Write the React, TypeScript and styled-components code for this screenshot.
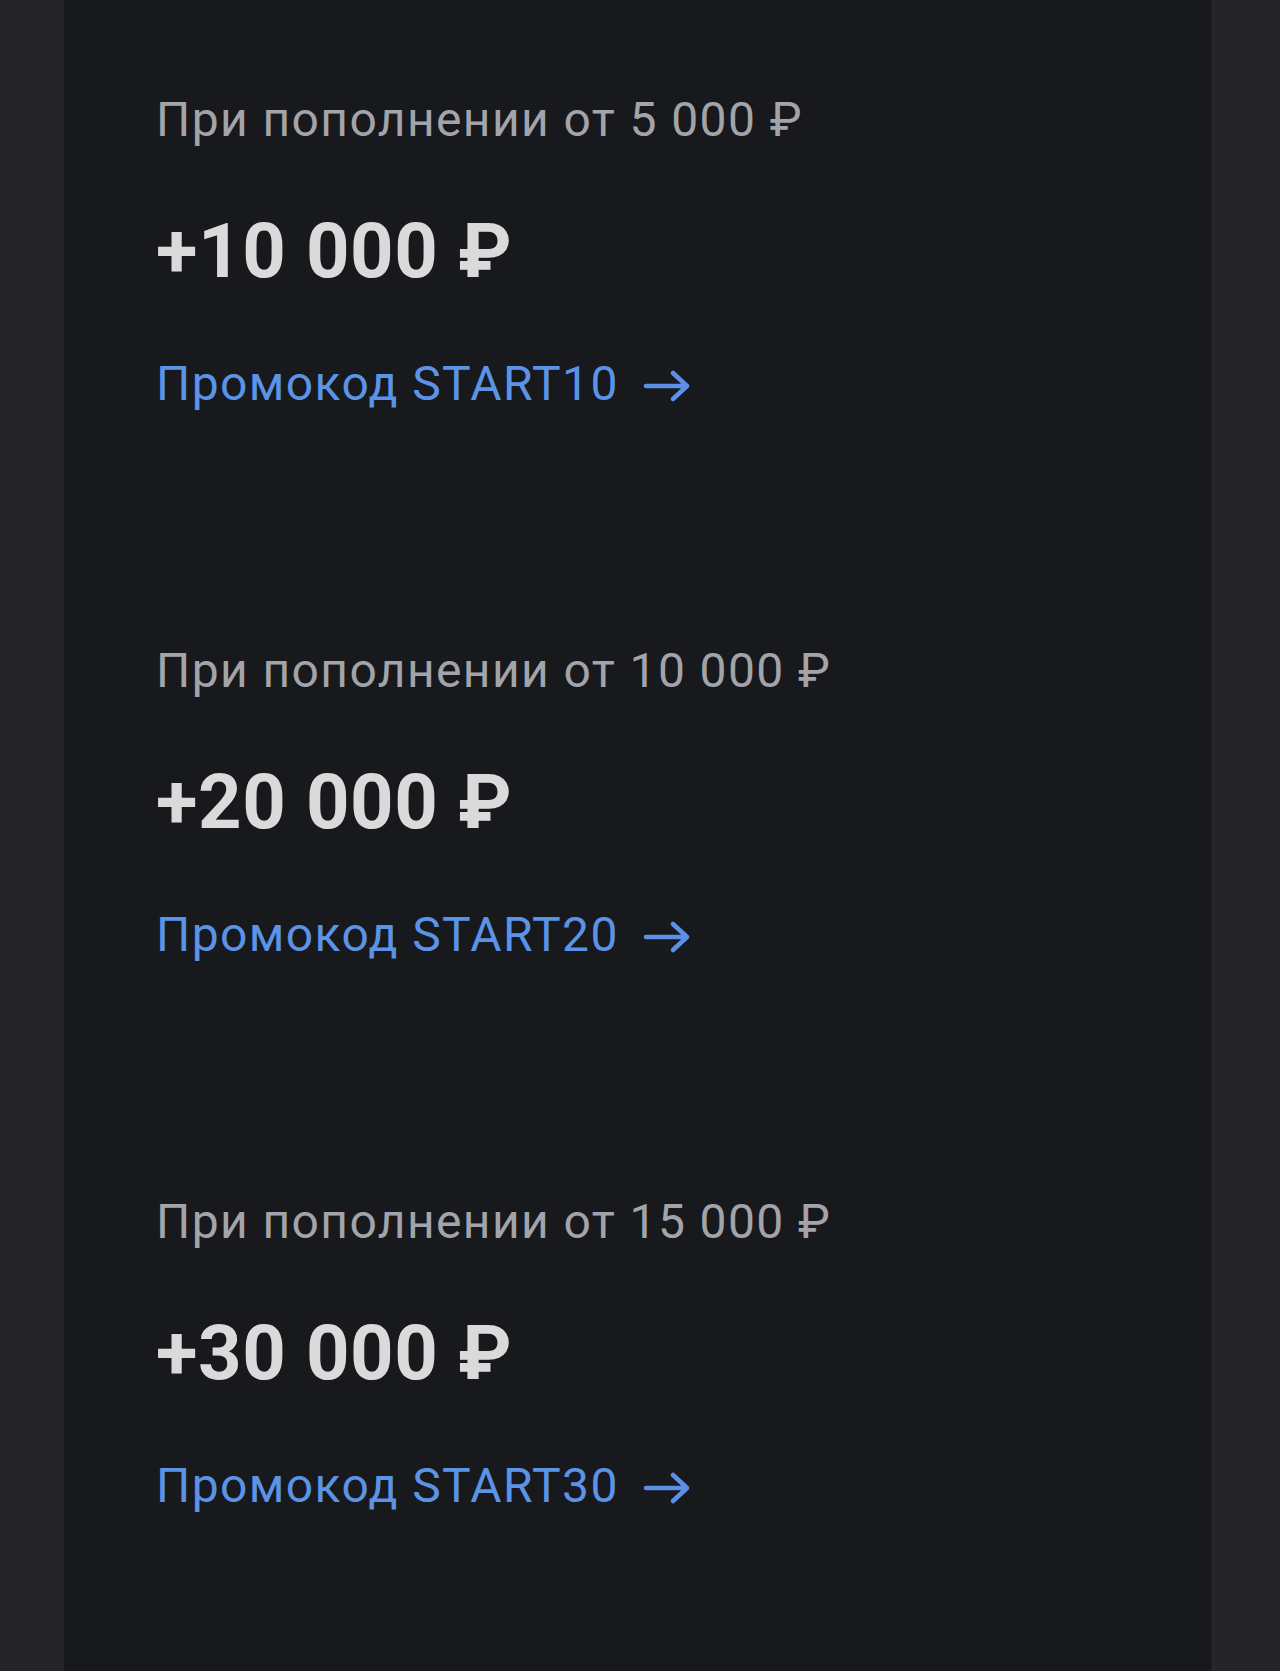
import { createGlobalStyle, styled } from 'styled-components';

const GlobalStyle = createGlobalStyle`
  html, body {
    margin: 0;
    padding: 0;
    background: #252429;
  }
  body {
    font-family: Roboto, "Noto Sans", sans-serif;
  }
`;

interface Offer {
  threshold: string;
  bonus: string;
  code: string;
}

const offers: Offer[] = [
  { threshold: '5 000', bonus: '+10 000', code: 'START10' },
  { threshold: '10 000', bonus: '+20 000', code: 'START20' },
  { threshold: '15 000', bonus: '+30 000', code: 'START30' },
];

const ArrowIcon = () => (
  <svg width="48" height="34" viewBox="0 0 48 34" fill="none">
    <path d="M3 17H44M30 4L44 17L30 30" stroke="#5b8fe8" strokeWidth="4.6" strokeLinecap="round" strokeLinejoin="round" />
  </svg>
);

const App = () => {
  return (
    <>
      <GlobalStyle />
      <Page>
        <Panel>
          {offers.map((offer) => (
            <OfferBlock key={offer.code}>
              <Label>При пополнении от {offer.threshold} ₽</Label>
              <Amount>{offer.bonus} ₽</Amount>
              <PromoLink href="#">
                <span>Промокод {offer.code}</span>
                <ArrowIcon />
              </PromoLink>
            </OfferBlock>
          ))}
        </Panel>
      </Page>
    </>
  );
};

export default App;

const Page = styled.div`
  width: 100%;
  min-height: 1671px;
  display: flex;
  padding: 0 67px 0 64px;
  box-sizing: border-box;
`;

const Panel = styled.main`
  flex: 1;
  min-height: 1671px;
  background: #18191d;
  border-right: 1px solid #2b2b30;
  padding: 92px 92px 0;
  box-sizing: border-box;
  display: flex;
  flex-direction: column;
  gap: 231px;
`;

const OfferBlock = styled.section`
  display: flex;
  flex-direction: column;
  align-items: flex-start;
`;

const Label = styled.p`
  margin: 0;
  font-size: 48px;
  line-height: 56px;
  font-weight: 400;
  color: #a3a4a9;
  letter-spacing: 1.4px;
`;

const Amount = styled.h2`
  margin: 59px 0 0;
  font-size: 76px;
  line-height: 88px;
  font-weight: 700;
  color: #dadada;
  letter-spacing: 0.6px;
`;

const PromoLink = styled.a`
  margin-top: 61px;
  display: flex;
  align-items: center;
  gap: 24px;
  font-size: 48px;
  line-height: 56px;
  color: #5b93e6;
  letter-spacing: 1.4px;
  text-decoration: none;

  svg {
    margin-top: 4px;
  }
`;
